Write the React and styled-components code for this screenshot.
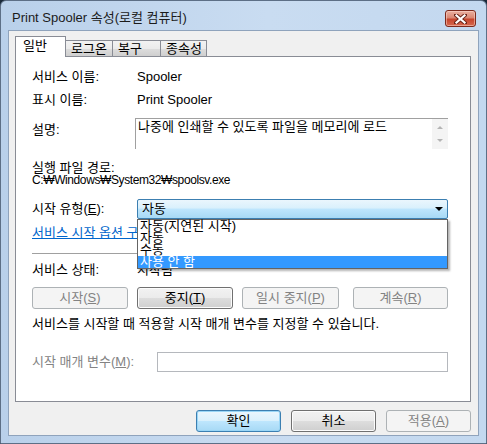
import React from "react";
import styled, { createGlobalStyle, css } from "styled-components";

const GlobalStyle = createGlobalStyle`
  html, body {
    margin: 0;
    padding: 0;
    background: #1a2a3a;
  }
  body {
    font-family: "Liberation Sans", "Noto Sans CJK KR", sans-serif;
    font-size: 13px;
    color: #000;
  }
`;

const Window = styled.div`
  width: 487px;
  height: 444px;
  box-sizing: border-box;
  display: flex;
  flex-direction: column;
  border: 1px solid #5d6f86;
  border-radius: 6px 6px 0 0;
  background: linear-gradient(to right, #b9d0ea 0%, #c9dcf1 55%, #c3d8ef 100%);
`;

const TitleBar = styled.div`
  height: 29px;
  flex: none;
  display: flex;
  justify-content: space-between;
  align-items: flex-start;
  padding: 0 10px 0 11px;
`;

const Title = styled.div`
  margin-top: 10px;
  line-height: 14px;
  font-size: 13px;
  color: #1b1b1b;
`;

const CloseButton = styled.div`
  margin-top: 9px;
  width: 29px;
  height: 15px;
  border: 1px solid #7c2a1d;
  border-radius: 3px;
  display: flex;
  align-items: center;
  justify-content: center;
  background: linear-gradient(
    to bottom,
    #eab0a0 0%,
    #d98773 45%,
    #c6452d 55%,
    #d66a50 100%
  );
  box-shadow: inset 0 0 0 1px rgba(255, 220, 210, 0.5);
`;

const Client = styled.div`
  flex: 1;
  margin: 0 7px 7px 7px;
  border: 1px solid #8fa3bc;
  background: #f0f0f0;
  display: flex;
  flex-direction: column;
  padding: 5px 7px 3px 6px;
`;

const TabRow = styled.div`
  display: flex;
  align-items: flex-end;
  height: 20px;
  flex: none;
`;

const Tab = styled.div`
  width: ${(p) => p.$w}px;
  box-sizing: border-box;
  border: 1px solid #898c95;
  border-bottom: none;
  line-height: 14px;
  white-space: nowrap;
  ${(p) =>
    p.$active
      ? css`
          height: 21px;
          margin-bottom: -1px;
          background: #fff;
          position: relative;
          z-index: 1;
          padding: 2px 0 0 7px;
        `
      : css`
          height: 16px;
          margin-left: -1px;
          background: linear-gradient(to bottom, #f2f2f2 0%, #ebebeb 50%, #dddddd 51%, #cfcfcf 100%);
          padding: 1px 0 0 5px;
        `}
`;

const Panel = styled.div`
  flex: none;
  height: 346px;
  box-sizing: border-box;
  border: 1px solid #898c95;
  background: #fff;
  padding: 13px 22px 0 16px;
  display: flex;
  flex-direction: column;
`;

const Row = styled.div`
  display: flex;
  align-items: ${(p) => p.$align || "center"};
  margin-top: ${(p) => p.$mt || 0}px;
  height: ${(p) => p.$h || 14}px;
  line-height: ${(p) => p.$lh || 14}px;
  position: relative;
  white-space: nowrap;
`;

const Label = styled.div`
  width: ${(p) => p.$w || 105}px;
  flex: none;
  padding-top: ${(p) => p.$pt || 0}px;
  color: ${(p) => (p.$disabled ? "#838383" : "#000")};
`;

const Value = styled.div``;

const PathValue = styled.div`
  font-size: 12px;
  letter-spacing: -0.4px;
`;

const DescBox = styled.div`
  flex: 1;
  height: 31px;
  box-sizing: border-box;
  margin-left: -2px;
  border-top: 1px solid #a0a0a0;
  border-left: 1px solid #a0a0a0;
  display: flex;
  line-height: 13px;
`;

const DescText = styled.div`
  flex: 1;
  padding: 1px 0 0 2px;
`;

const ScrollBar = styled.div`
  width: 16px;
  background: #f4f4f4;
  display: flex;
  flex-direction: column;
  align-items: center;
  justify-content: space-around;
  padding: 2px 0;
`;

const ScrollArrow = styled.div`
  width: 0;
  height: 0;
  border-left: 3px solid transparent;
  border-right: 3px solid transparent;
  ${(p) =>
    p.$down
      ? css`border-top: 3px solid #b4b4b4;`
      : css`border-bottom: 3px solid #b4b4b4;`}
`;

const Combo = styled.div`
  flex: 1;
  height: 20px;
  box-sizing: border-box;
  position: relative;
  border: 1px solid #3c7fb1;
  border-radius: 2px;
  background: linear-gradient(to bottom, #eaf6fd 0%, #d9f0fc 45%, #bee6fd 50%, #a7d9f5 100%);
  display: flex;
  align-items: center;
  padding: 0 0 0 4px;
  font-size: 13px;
`;

const ComboArrow = styled.div`
  margin-left: auto;
  margin-right: 4px;
  width: 0;
  height: 0;
  border-left: 4px solid transparent;
  border-right: 4px solid transparent;
  border-top: 4px solid #000;
`;

const DropList = styled.div`
  position: absolute;
  left: -1px;
  right: -1px;
  top: 19px;
  z-index: 5;
  background: #fff;
  border: 1px solid #646464;
  box-shadow: 2px 2px 2px rgba(0, 0, 0, 0.3);
  display: flex;
  flex-direction: column;
`;

const DropItem = styled.div`
  height: 12px;
  line-height: 12px;
  font-size: 13px;
  padding-left: 2px;
  overflow: visible;
  background: ${(p) => (p.$selected ? "#3399ff" : "transparent")};
  color: ${(p) => (p.$selected ? "#fff" : "#000")};
`;

const Link = styled.a`
  color: #0066cc;
  text-decoration: underline;
  cursor: pointer;
`;

const Separator = styled.div`
  margin-top: ${(p) => p.$mt}px;
  height: 1px;
  background: #a0a0a0;
  flex: none;
`;

const ButtonRow = styled.div`
  display: flex;
  gap: 9px;
  margin-top: ${(p) => p.$mt}px;
  height: 22px;
  flex: none;
`;

const Button = styled.div`
  width: ${(p) => p.$w}px;
  height: 22px;
  box-sizing: border-box;
  border-radius: 3px;
  display: flex;
  align-items: center;
  justify-content: center;
  line-height: 14px;
  margin-left: ${(p) => (p.$push ? "auto" : "0")};
  ${(p) =>
    p.$variant === "disabled"
      ? css`
          border: 1px solid #adb2b5;
          background: #f4f4f4;
          color: #838383;
        `
      : p.$variant === "default"
      ? css`
          border: 1px solid #3c7fb1;
          background: linear-gradient(to bottom, #eaf6fd 0%, #d9f0fc 50%, #bee6fd 51%, #a7d9f5 100%);
          box-shadow: inset 0 0 0 1px #9ad6f6;
        `
      : css`
          border: 1px solid #707070;
          background: linear-gradient(to bottom, #f2f2f2 0%, #ebebeb 50%, #dddddd 51%, #cfcfcf 100%);
          box-shadow: inset 0 0 0 1px #fcfcfc;
        `}
`;

const Mn = styled.u`
  text-decoration: underline;
`;

const Input = styled.div`
  flex: 1;
  height: 20px;
  box-sizing: border-box;
  border: 1px solid #b5b8bd;
  background: #fff;
`;

const Footer = styled.div`
  margin-top: 8px;
  display: flex;
  justify-content: flex-end;
  gap: 10px;
`;

const startTypes = ["자동(지연된 시작)", "자동", "수동", "사용 안 함"];

export default function App() {
  return (
    <>
      <GlobalStyle />
      <Window>
        <TitleBar>
          <Title>Print Spooler 속성(로컬 컴퓨터)</Title>
          <CloseButton>
            <svg width="13" height="10" viewBox="0 0 13 10">
              <path d="M2 1 L11 9 M11 1 L2 9" stroke="#6b2418" strokeWidth="4" strokeLinecap="square" />
              <path d="M2.5 1.5 L10.5 8.5 M10.5 1.5 L2.5 8.5" stroke="#fff" strokeWidth="2.2" strokeLinecap="square" />
            </svg>
          </CloseButton>
        </TitleBar>
        <Client>
          <TabRow>
            <Tab $active $w={51}>일반</Tab>
            <Tab $w={48}>로그온</Tab>
            <Tab $w={49}>복구</Tab>
            <Tab $w={47}>종속성</Tab>
          </TabRow>
          <Panel>
            <Row $mt={0}>
              <Label>서비스 이름:</Label>
              <Value>Spooler</Value>
            </Row>
            <Row $mt={9}>
              <Label>표시 이름:</Label>
              <Value>Print Spooler</Value>
            </Row>
            <Row $mt={11} $h={31} $align="flex-start">
              <Label $pt={5}>설명:</Label>
              <DescBox>
                <DescText>나중에 인쇄할 수 있도록 파일을 메모리에 로드</DescText>
                <ScrollBar>
                  <ScrollArrow />
                  <ScrollArrow $down />
                </ScrollBar>
              </DescBox>
            </Row>
            <Row $mt={12} $h={13} $lh={13}>
              <Label $w={300}>실행 파일 경로:</Label>
            </Row>
            <Row $h={13} $lh={13}>
              <PathValue>C:₩Windows₩System32₩spoolsv.exe</PathValue>
            </Row>
            <Row $mt={12} $h={20}>
              <Label>
                시작 유형(<Mn>E</Mn>):
              </Label>
              <Combo>
                자동
                <ComboArrow />
                <DropList>
                  {startTypes.map((t, i) => (
                    <DropItem key={t} $selected={i === startTypes.length - 1}>
                      {t}
                    </DropItem>
                  ))}
                </DropList>
              </Combo>
            </Row>
            <Row $mt={7}>
              <Link>서비스 시작 옵션 구성 도움말</Link>
            </Row>
            <Separator $mt={13} />
            <Row $mt={9}>
              <Label>서비스 상태:</Label>
              <Value>시작됨</Value>
            </Row>
            <ButtonRow $mt={10}>
              <Button $w={96} $variant="disabled">
                시작(<Mn>S</Mn>)
              </Button>
              <Button $w={96}>
                중지(<Mn>T</Mn>)
              </Button>
              <Button $w={97} $variant="disabled">
                일시 중지(<Mn>P</Mn>)
              </Button>
              <Button $w={95} $variant="disabled" $push>
                계속(<Mn>R</Mn>)
              </Button>
            </ButtonRow>
            <Row $mt={8}>
              <Value>서비스를 시작할 때 적용할 시작 매개 변수를 지정할 수 있습니다.</Value>
            </Row>
            <Row $mt={21} $h={20}>
              <Label $w={125} $disabled>
                시작 매개 변수(<Mn>M</Mn>):
              </Label>
              <Input />
            </Row>
          </Panel>
          <Footer>
            <Button $w={85} $variant="default">확인</Button>
            <Button $w={85}>취소</Button>
            <Button $w={85} $variant="disabled">
              적용(<Mn>A</Mn>)
            </Button>
          </Footer>
        </Client>
      </Window>
    </>
  );
}
